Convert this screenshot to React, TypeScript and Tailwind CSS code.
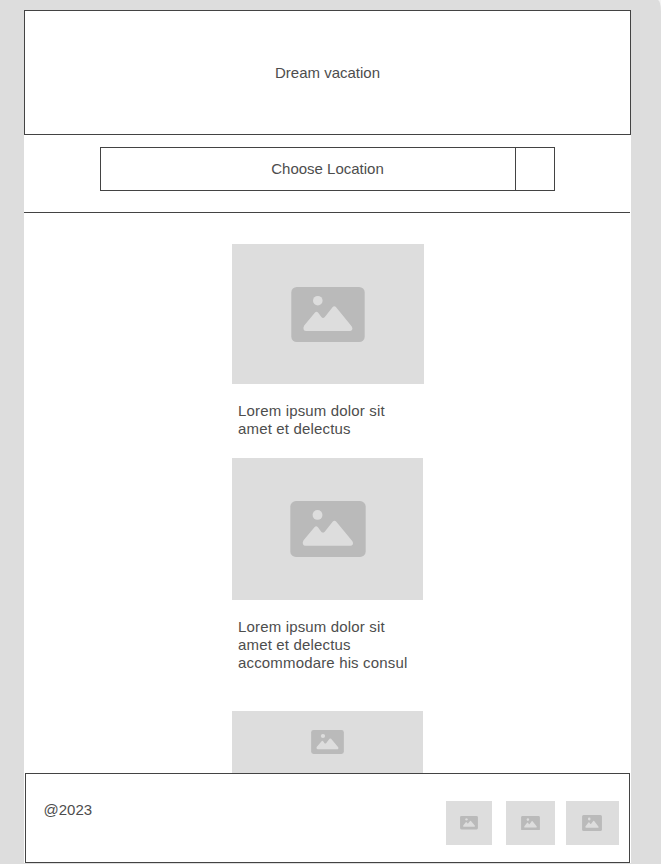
type IconProps = { className: string };

function PictureIcon({ className }: IconProps) {
  return (
    <svg viewBox="0 0 74 55" preserveAspectRatio="none" className={className} aria-hidden="true">
      <rect x="0.3" width="73.4" height="55" rx="5.5" fill="#bababa" />
      <circle cx="26.8" cy="13.7" r="4.8" fill="#dddddd" />
      <path
        d="M13.2 38.6 L23.8 25.7 Q25.5 24 27.2 25.7 L30.4 30.1 Q32 31.9 33.8 30.1 L41.5 20.3 Q43.3 18.4 45.1 20.3 L60.6 39.2 Q62 41.2 61.1 42.8 Q60.3 44 58.8 44 H15.2 Q13.2 44 12.6 42.5 Q12 40.4 13.2 38.6 Z"
        fill="#dddddd"
      />
    </svg>
  );
}

export default function App() {
  return (
    <div className="h-[864px] w-[661px] overflow-hidden bg-[#f4f4f4] font-['Liberation_Sans',Arial,sans-serif] text-[15px] leading-[18px] text-[#4d4d4d]">
      <div className="h-full rounded-tr-[3px_12px] bg-[#dddddd] pt-[10px] pl-6">
        <div className="flex h-[853px] w-[607px] flex-col bg-white">
          <header className="flex h-[125px] shrink-0 items-center justify-center border border-[#434343]">
            <h1>Dream vacation</h1>
          </header>

          <div className="mr-px h-[78px] shrink-0 border-b border-[#434343] pt-3 pl-[76px]">
            <div className="flex h-[44px] w-[455px] border border-[#434343]">
              <button className="flex-1 pl-[39px] text-center">Choose Location</button>
              <div className="w-[39px] border-l border-[#434343]" />
            </div>
          </div>

          <main className="flex h-[560px] shrink-0 flex-col overflow-hidden pt-[31px] pl-[208px]">
            <article className="h-[214px] shrink-0">
              <div className="flex h-[140px] w-[192px] items-center justify-center bg-[#dddddd]">
                <PictureIcon className="h-[55px] w-[74px]" />
              </div>
              <p className="mt-[18px] ml-1.5 w-[180px] tracking-[0.16px]">
                Lorem ipsum dolor sit
                <br />
                amet et delectus
              </p>
            </article>
            <article className="h-[253px] shrink-0">
              <div className="flex h-[142px] w-[191px] items-center justify-center bg-[#dddddd]">
                <PictureIcon className="h-[56px] w-[76px]" />
              </div>
              <p className="mt-[18px] ml-1.5 w-[180px] tracking-[0.16px]">
                Lorem ipsum dolor sit
                <br />
                amet et delectus
                <br />
                accommodare his consul
              </p>
            </article>
            <div className="flex h-[62px] w-[191px] shrink-0 items-center justify-center bg-[#dddddd]">
              <PictureIcon className="h-6 w-[33px]" />
            </div>
          </main>

          <footer className="mr-px ml-px flex h-[90px] shrink-0 items-start border border-[#434343] pr-2.5 pl-[17.5px]">
            <p className="mt-[27px] flex-1">@2023</p>
            <div className="mt-[27px] flex">
              <div className="mr-3.5 flex h-[44px] w-[46px] items-center justify-center bg-[#dddddd]">
                <PictureIcon className="h-[13.4px] w-[18px]" />
              </div>
              <div className="mr-[11px] flex h-[44px] w-[49px] items-center justify-center bg-[#dddddd]">
                <PictureIcon className="h-[14.5px] w-[19px]" />
              </div>
              <div className="flex h-[44px] w-[53px] items-center justify-center bg-[#dddddd]">
                <PictureIcon className="mr-px h-4 w-5" />
              </div>
            </div>
          </footer>
        </div>
      </div>
    </div>
  );
}
